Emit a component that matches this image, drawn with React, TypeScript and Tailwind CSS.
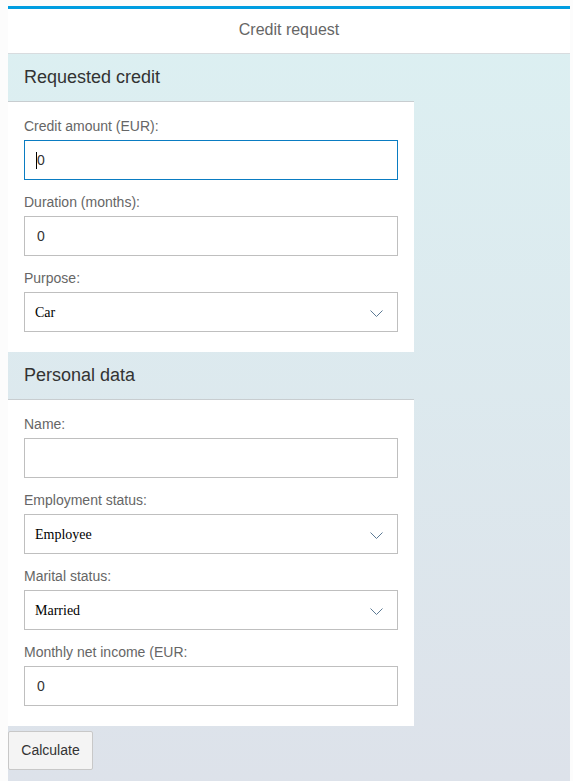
import { useState } from "react";

type Field = {
  label: string;
  kind: "input" | "select";
  value: string;
  focused?: boolean;
};

const Chevron = () => (
  <svg width="13" height="8" viewBox="0 0 13 8" className="absolute right-[14px] top-1/2 -translate-y-[2px]">
    <polyline points="0.5,0.5 6.5,6.5 12.5,0.5" fill="none" stroke="#5d7a94" strokeWidth="1" />
  </svg>
);

const FormField = ({ field }: { field: Field }) => {
  const [val, setVal] = useState(field.value);
  return (
    <div className="pt-[14px]">
      <label className="block text-[14px] leading-[17px] text-[#666] mb-[5px]">{field.label}</label>
      {field.kind === "input" ? (
        <div className="relative">
          <input
            type="text"
            value={val}
            onChange={(e) => setVal(e.target.value)}
            className={
              "w-full h-[40px] px-[12px] text-[14px] text-[#333] bg-white outline-none border " +
              (field.focused ? "border-[#0a7cc2]" : "border-[#bfbfbf]")
            }
          />
          {field.focused && <span className="absolute left-[12px] top-[12px] w-px h-[17px] bg-black" />}
        </div>
      ) : (
        <div className="relative h-[40px] border border-[#bfbfbf] bg-white flex items-center px-[10px]">
          <span className="text-[14px] text-black font-['Liberation_Serif',serif]">{val}</span>
          <Chevron />
        </div>
      )}
    </div>
  );
};

const Section = ({ title, fields }: { title: string; fields: Field[] }) => (
  <div className="w-[406px]">
    <div className="h-[48px] flex items-center px-[16px] border-b border-[#c8cdd0]">
      <h2 className="text-[18px] text-[#333]">{title}</h2>
    </div>
    <div className="bg-white px-[16px] pt-[2px] pb-[20px]">
      {fields.map((f) => (
        <FormField key={f.label} field={f} />
      ))}
    </div>
  </div>
);

export default function App() {
  return (
    <div className="w-[573px] h-[781px] bg-[#fcfcfc] pt-[6px] pl-[8px] pr-[3px] font-['Liberation_Sans',Arial,sans-serif] overflow-hidden">
      <div className="h-[775px] flex flex-col bg-gradient-to-b from-[#dcf0f2] to-[#dde2ea]">
        <div className="h-[3px] bg-[#009de0]" />
        <div className="h-[45px] bg-white border-b border-[#d8dcdf] flex items-center justify-center pb-[2px]">
          <span className="text-[16px] text-[#666]">Credit request</span>
        </div>
        <Section
          title="Requested credit"
          fields={[
            { label: "Credit amount (EUR):", kind: "input", value: "0", focused: true },
            { label: "Duration (months):", kind: "input", value: "0" },
            { label: "Purpose:", kind: "select", value: "Car" },
          ]}
        />
        <Section
          title="Personal data"
          fields={[
            { label: "Name:", kind: "input", value: "" },
            { label: "Employment status:", kind: "select", value: "Employee" },
            { label: "Marital status:", kind: "select", value: "Married" },
            { label: "Monthly net income (EUR:", kind: "input", value: "0" },
          ]}
        />
        <div className="pt-[5px]">
          <button className="w-[85px] h-[39px] bg-[#f4f4f4] border border-[#c8c8c8] rounded-[2px] text-[14px] text-[#333]">
            Calculate
          </button>
        </div>
      </div>
    </div>
  );
}
